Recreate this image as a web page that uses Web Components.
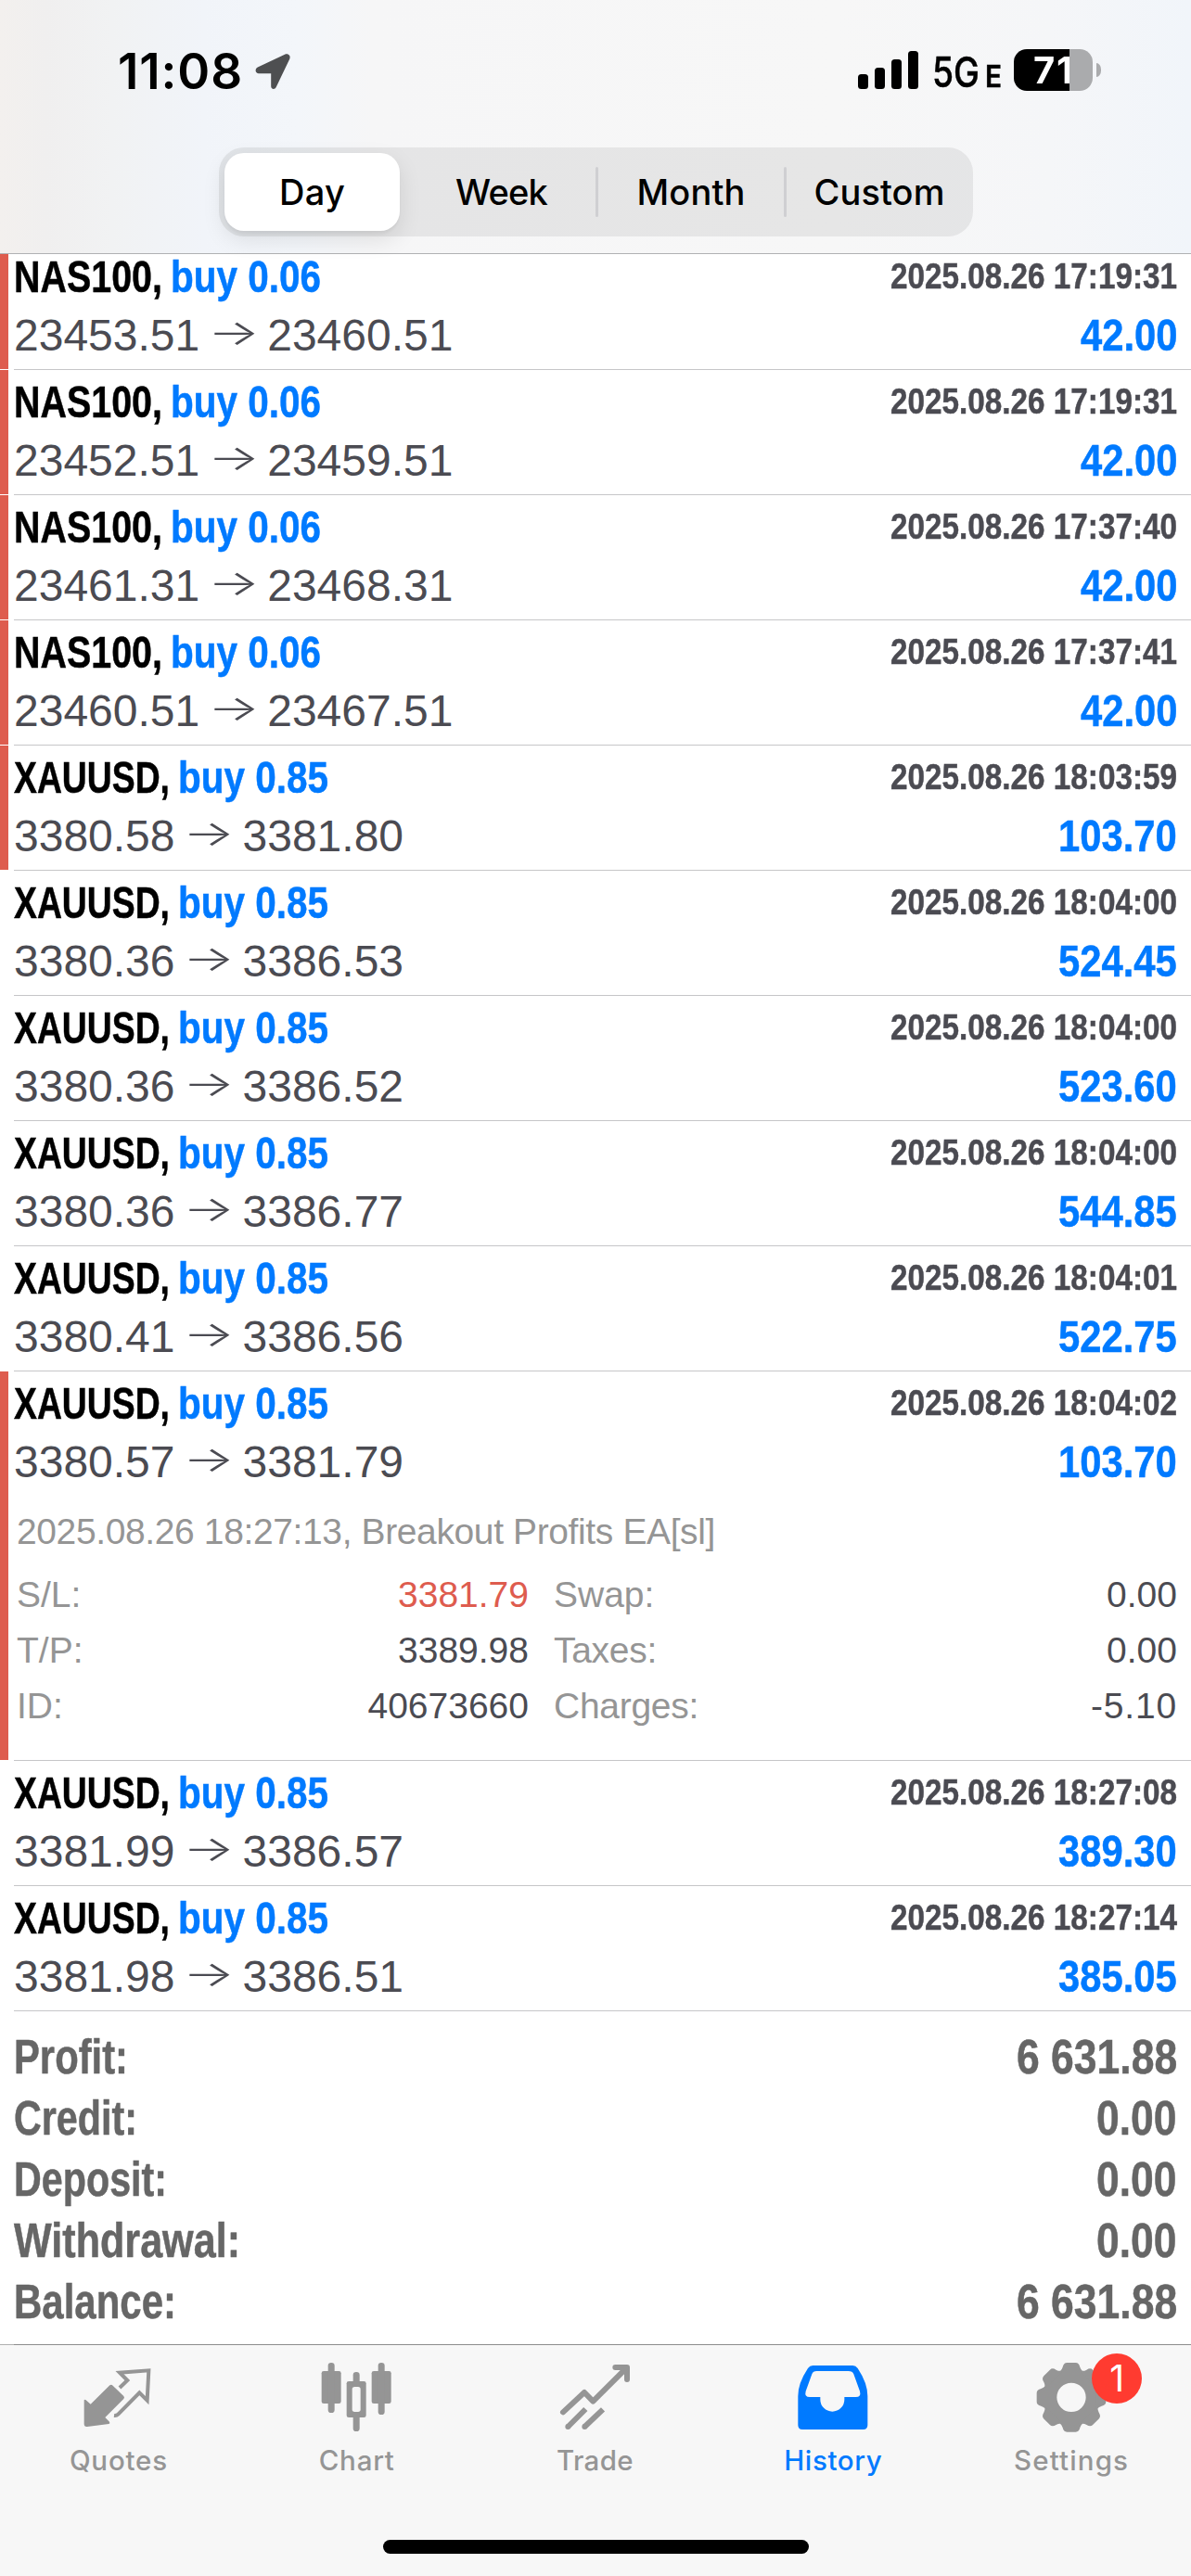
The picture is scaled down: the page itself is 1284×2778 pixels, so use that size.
<!DOCTYPE html>
<html lang="en">
<head>
<meta charset="utf-8">
<title>History</title>
<style>
html,body{margin:0;padding:0;background:#fff}
body{width:1284px;height:2778px;overflow:hidden;font-family:"Liberation Sans",Arial,sans-serif}
</style>
</head>
<body>
<history-app></history-app>
<script>
const define = (name, html, setup) => {
  const tpl = document.createElement('template');
  tpl.innerHTML = html;
  customElements.define(name, class extends HTMLElement {
    connectedCallback() {
      if (this.shadowRoot) return;
      const root = this.attachShadow({ mode: 'open' });
      root.append(tpl.content.cloneNode(true));
      if (setup) setup(this, root);
    }
  });
};

/* Single line of text, tracked so that its advance equals the w attribute. */
define('fit-text', `<style>
:host{display:inline-block;white-space:pre}
</style><span><slot></slot></span>`, (el, root) => {
  const w = parseFloat(el.getAttribute('w'));
  if (!w) return;
  const span = root.querySelector('span');
  const n = el.textContent.length;
  const natural = span.getBoundingClientRect().width;
  el.style.letterSpacing = ((w - natural) / n).toFixed(3) + 'px';
});

/* Condensed text: glyphs are narrowed to the width w, or by the ratio attribute. */
define('condensed-text', `<style>
:host{display:inline-block;white-space:pre;-webkit-text-stroke:.5px currentColor}
span{display:inline-block;transform-origin:0 50%}
</style><span><slot></slot></span>`, (el, root) => {
  const span = root.querySelector('span');
  const natural = span.getBoundingClientRect().width;
  const ratio = parseFloat(el.getAttribute('ratio')) || parseFloat(el.getAttribute('w')) / natural;
  el.style.width = natural * ratio + 'px';
  span.style.transform = `scaleX(${ratio})`;
});

define('status-bar', `<style>
:host{display:flex;height:159px;box-sizing:border-box;padding:53px 97px 0 127px;justify-content:space-between;font-family:Inter,sans-serif}
.l,.r{display:flex;height:46px;align-items:flex-start}
.time{font-size:53px;font-weight:600;line-height:48px}
.loc{width:40px;height:40px;margin:4px 0 0 12px}
.sig{width:66px;height:42px;margin:1px 0 0 0}
.net{font-size:45px;font-weight:500;line-height:50px;margin-left:14px}
.e{font-size:33px;font-weight:600;line-height:58px;margin-left:6px}
.bat{display:flex;align-items:center;margin-left:13px}
.body{width:85px;height:45px;border-radius:14px;background:linear-gradient(90deg,#000 60px,#aaabad 60px);font-size:40px;font-weight:700;line-height:45px;box-sizing:border-box;padding-left:21px}
.body fit-text{color:transparent;background:linear-gradient(90deg,#fff 39px,#aaabad 39px);-webkit-background-clip:text;background-clip:text}
.cap{width:5px;height:15px;border-radius:0 6px 6px 0/0 8px 8px 0;background:#aaabad;margin-left:4px}
</style>
<div class="l"><fit-text class="time" w="135">11:08</fit-text>
<svg class="loc" viewBox="0 0 40 40"><path fill="#4e4f51" d="M33 1.8 3.800 15.500C.500 17.200 1 22 5 22.200H18.200V36.200C18.500 39.500 22.300 40 23.800 36.800L38.300 6.500C39.800 3 36.500 .2 33 1.800Z"/></svg></div>
<div class="r"><svg class="sig" viewBox="0 0 66 42"><rect x="0" y="26" width="11" height="16" rx="3.500"/><rect x="18" y="19" width="11" height="23" rx="3.500"/><rect x="36" y="10" width="11" height="32" rx="3.500"/><rect x="54" y="1" width="11" height="41" rx="3.500"/></svg>
<condensed-text class="net" w="51">5G</condensed-text><condensed-text class="e" w="18">E</condensed-text>
<div class="bat"><div class="body"><fit-text w="44">71</fit-text></div><div class="cap"></div></div></div>`);

define('segmented-control', `<style>
:host{display:flex;width:813px;height:96px;box-sizing:border-box;padding:6px;margin:0 auto 0 236px;border-radius:27px;background:rgba(118,118,118,.13);font:450 38px/84px Inter,sans-serif;align-items:center}
div{display:flex;flex:none;justify-content:center;height:84px;box-sizing:border-box}
.on{width:189px;border-radius:21px;background:#fff;box-shadow:0 9px 24px rgba(0,0,0,.1),0 3px 3px rgba(0,0,0,.04);font-weight:500}
.b{width:211px;padding-left:8px}.c{width:200px}.d{width:195px;padding-left:5px}
i{width:3px;height:54px;flex:none;border-radius:2px;background:#cfcfd2}
</style>
<div class="on"><fit-text w="71">Day</fit-text></div><div class="b"><fit-text w="99">Week</fit-text></div><i></i><div class="c"><fit-text w="117">Month</fit-text></div><i></i><div class="d"><fit-text w="141">Custom</fit-text></div>`);

define('history-row', `<style>
:host{display:flex;flex-direction:column;flex:none;position:relative;height:135px;box-sizing:border-box;padding:7px 15px 0 15px;color:#4b4b52}
:host([details]){height:420px}
:host([first]){height:125px;padding-top:0}
:host([first]) .top{margin-top:-3px}
.line{display:flex;justify-content:space-between;align-items:flex-start;flex:none;height:56px;line-height:56px;font-size:48px;white-space:pre}
.line+.line{margin-top:7px}
.name{display:flex;gap:9px}
.name,.date,.p{font-weight:700}
.t{color:#000}.buy,.p{color:#007aff}
.date{font-size:39px;line-height:54px}
.price{display:flex}
.arrow{width:73px;display:flex;justify-content:center;font-family:Inter,sans-serif;font-weight:300;font-size:38px;line-height:49px}
.arrow span{transform:scaleX(1.55)}
.bar{position:absolute;left:0;top:0;bottom:1px;width:9px;background:#de5c4e;display:none}
:host([closed]) .bar{display:block}
.sep{position:absolute;left:15px;right:0;bottom:0;height:1px;background:#c6c6c8}
</style>
<span class="bar"></span><span class="sep"></span>
<div class="line top"><div class="name"></div></div>
<div class="line"><div class="price"><span class="a"></span><div class="arrow"><span>→</span></div><span class="z"></span></div></div>
<slot></slot>`, (el, root) => {
  const [top, bottom] = root.querySelectorAll('.line');
  const g = a => el.getAttribute(a);
  const add = (parent, cls, text, attr, value) => {
    const t = document.createElement('condensed-text');
    t.className = cls; t.textContent = text; t.setAttribute(attr, value);
    parent.append(t);
  };
  const name = root.querySelector('.name');
  add(name, 't', g('symbol') + ',', 'w', g('symbol') === 'NAS100' ? 160 : 168);
  add(name, 'buy', 'buy ' + g('lots'), 'w', 162);
  add(top, 'date', g('time'), 'w', 309);
  add(bottom, 'p', g('profit'), 'ratio', .87);
  root.querySelector('.a').textContent = g('from');
  root.querySelector('.z').textContent = g('to');
});

define('deal-details', `<style>
:host{display:block;font-size:39px;line-height:60px;color:#959595;padding-left:3px;margin-top:17px}
.grid{display:grid;grid-template-columns:552px 672px;column-gap:27px;margin-top:8px}
.grid div{display:flex;justify-content:space-between}
b{font-weight:400;color:#4b4b52}
.red{color:#de5c4e}
</style>
<fit-text w="753">2025.08.26 18:27:13, Breakout Profits EA[sl]</fit-text>
<div class="grid">
<div><span>S/L:</span><b class="red">3381.79</b></div><div><span>Swap:</span><b>0.00</b></div>
<div><span>T/P:</span><b>3389.98</b></div><div><fit-text w="111">Taxes:</fit-text><b>0.00</b></div>
<div><span>ID:</span><b>40673660</b></div><div><fit-text w="156">Charges:</fit-text><b><fit-text w="93">-5.10</fit-text></b></div>
</div>`);

define('account-summary', `<style>
:host{display:block;padding:17px 15px 0;font-weight:700;font-size:51px;line-height:66px;color:#666}
div{display:flex;justify-content:space-between}
</style>
<div><condensed-text w="123">Profit:</condensed-text><condensed-text ratio=".872">6 631.88</condensed-text></div>
<div><condensed-text w="133">Credit:</condensed-text><condensed-text ratio=".872">0.00</condensed-text></div>
<div><condensed-text w="165">Deposit:</condensed-text><condensed-text ratio=".872">0.00</condensed-text></div>
<div><condensed-text w="244">Withdrawal:</condensed-text><condensed-text ratio=".872">0.00</condensed-text></div>
<div><condensed-text w="175">Balance:</condensed-text><condensed-text ratio=".872">6 631.88</condensed-text></div>`);

define('tab-item', `<style>
:host{display:flex;flex:1;flex-direction:column;align-items:center;position:relative;color:#959595;padding-top:17px;font:500 29.500px/36px Inter,sans-serif}
:host([active]){color:#007aff}
::slotted(svg){width:80px;height:78px;display:block}
.label{margin-top:11px;padding-right:1px}
.badge{position:absolute;left:150px;top:9px;width:54px;height:54px;border-radius:50%;background:#ff3b30;color:#fff;font:400 39px/54px Inter,sans-serif;text-align:center}
</style><slot></slot><div class="label"></div>`, (el, root) => {
  const f = document.createElement('fit-text');
  f.textContent = el.getAttribute('label');
  f.setAttribute('w', el.getAttribute('w'));
  root.querySelector('.label').append(f);
  if (el.hasAttribute('badge')) {
    const b = document.createElement('span');
    b.className = 'badge'; b.textContent = el.getAttribute('badge');
    root.append(b);
  }
});

define('tab-bar', `<style>
:host{display:flex;flex-direction:column;height:250px;box-sizing:border-box;background:linear-gradient(90deg,#b0b0b0 15px,#8c8c8c 15px) 0 0/100% 1px no-repeat,#f7f7f7;padding-top:1px}
.tabs{display:flex;height:210px}
.home{width:459px;height:15px;border-radius:8px;background:#000;margin-left:413px}
</style>
<div class="tabs">
<tab-item label="Quotes" w="106"><svg viewBox="265 108 240 234"><path fill="#959595" d="M356 187Q361 183 366 188L401 222Q405 227 401 231L341 291L355 305Q358 310 353 312L283 321Q273 322 273 312V235Q275 231 279 235L294 248Z"/><path fill="none" stroke="#959595" stroke-width="12" d="M388 195L413 171L388 146L482 139L477 236L452 211L383 281Q378 286 370 285"/></svg></tab-item>
<tab-item label="Chart" w="82"><svg viewBox="1036 108 240 234" fill="#959595"><rect x="1041" y="141" width="63" height="105" rx="7"/><rect x="1062" y="114" width="21" height="162" rx="10"/><rect x="1122" y="174" width="63" height="117" rx="7"/><rect x="1143" y="144" width="21" height="192" rx="10"/><rect x="1140" y="192" width="27" height="81" rx="8" fill="#f7f7f7"/><rect x="1203" y="141" width="63" height="105" rx="7"/><rect x="1224" y="114" width="21" height="168" rx="10"/></svg></tab-item>
<tab-item label="Trade" w="83"><svg viewBox="486 108 240 234" fill="none" stroke="#959595" stroke-width="18"><path stroke-linecap="round" stroke-linejoin="round" d="M501 274L570 210L598 239L707 130M670 129H708V168"/><path d="M517 321L574 264M571 321L630 265"/><g fill="#959595" stroke="none"><circle cx="517" cy="321" r="9"/><circle cx="571" cy="321" r="9"/></g></svg></tab-item>
<tab-item label="History" w="106" active><svg viewBox="116 108 240 234"><path fill="#007aff" fill-rule="evenodd" d="M168 123H297Q307 123 313 132Q345 180 345 222V316Q345 330 331 330H134Q120 330 120 316V222Q120 180 152 132Q158 123 168 123ZM180 141H283Q296 141 300 151L320 206Q325 225 307 225H270V233A39 39 0 0 1 192 233V225H158Q140 225 145 206L165 151Q169 141 180 141Z"/></svg></tab-item>
<tab-item label="Settings" w="124" badge="1"><svg viewBox="887 108 240 234"><defs><path id="t" d="M-36 -80V-85Q-31 -89 -28 -98Q-25 -112 -14 -112H14Q25 -112 28 -98Q31 -89 36 -85V-80Z"/></defs><g transform="translate(1004 226)" fill="#959595"><circle r="69" fill="none" stroke="#959595" stroke-width="44"/><use href="#t"/><use href="#t" transform="rotate(45)"/><use href="#t" transform="rotate(90)"/><use href="#t" transform="rotate(135)"/><use href="#t" transform="rotate(180)"/><use href="#t" transform="rotate(225)"/><use href="#t" transform="rotate(270)"/><use href="#t" transform="rotate(315)"/></g></svg></tab-item>
</div><div class="home"></div>`);

define('history-app', `<style>
:host{display:flex;flex-direction:column;width:1284px;height:2778px;background:#fff}
header{height:274px;box-sizing:border-box;border-bottom:1px solid #b0b1b3;flex:none;background:linear-gradient(90deg,#f3f0ee 0,#f0efef 50px,#f1f2f3 120px,#f1f4f9 220px,#f3f6fa 320px,#f6f6f7 400px,#f7f7f7 900px,#f5f6f8 1130px,#f1f5fa 1284px)}
main{display:flex;flex-direction:column;height:2254px;flex:none}
</style>
<header><status-bar></status-bar><segmented-control></segmented-control></header>
<main>
<history-row first closed symbol="NAS100" lots="0.06" time="2025.08.26 17:19:31" from="23453.51" to="23460.51" profit="42.00"></history-row>
<history-row closed symbol="NAS100" lots="0.06" time="2025.08.26 17:19:31" from="23452.51" to="23459.51" profit="42.00"></history-row>
<history-row closed symbol="NAS100" lots="0.06" time="2025.08.26 17:37:40" from="23461.31" to="23468.31" profit="42.00"></history-row>
<history-row closed symbol="NAS100" lots="0.06" time="2025.08.26 17:37:41" from="23460.51" to="23467.51" profit="42.00"></history-row>
<history-row closed symbol="XAUUSD" lots="0.85" time="2025.08.26 18:03:59" from="3380.58" to="3381.80" profit="103.70"></history-row>
<history-row symbol="XAUUSD" lots="0.85" time="2025.08.26 18:04:00" from="3380.36" to="3386.53" profit="524.45"></history-row>
<history-row symbol="XAUUSD" lots="0.85" time="2025.08.26 18:04:00" from="3380.36" to="3386.52" profit="523.60"></history-row>
<history-row symbol="XAUUSD" lots="0.85" time="2025.08.26 18:04:00" from="3380.36" to="3386.77" profit="544.85"></history-row>
<history-row symbol="XAUUSD" lots="0.85" time="2025.08.26 18:04:01" from="3380.41" to="3386.56" profit="522.75"></history-row>
<history-row closed details symbol="XAUUSD" lots="0.85" time="2025.08.26 18:04:02" from="3380.57" to="3381.79" profit="103.70"><deal-details></deal-details></history-row>
<history-row symbol="XAUUSD" lots="0.85" time="2025.08.26 18:27:08" from="3381.99" to="3386.57" profit="389.30"></history-row>
<history-row symbol="XAUUSD" lots="0.85" time="2025.08.26 18:27:14" from="3381.98" to="3386.51" profit="385.05"></history-row>
<account-summary></account-summary>
</main>
<tab-bar></tab-bar>`);
</script>
</body>
</html>
